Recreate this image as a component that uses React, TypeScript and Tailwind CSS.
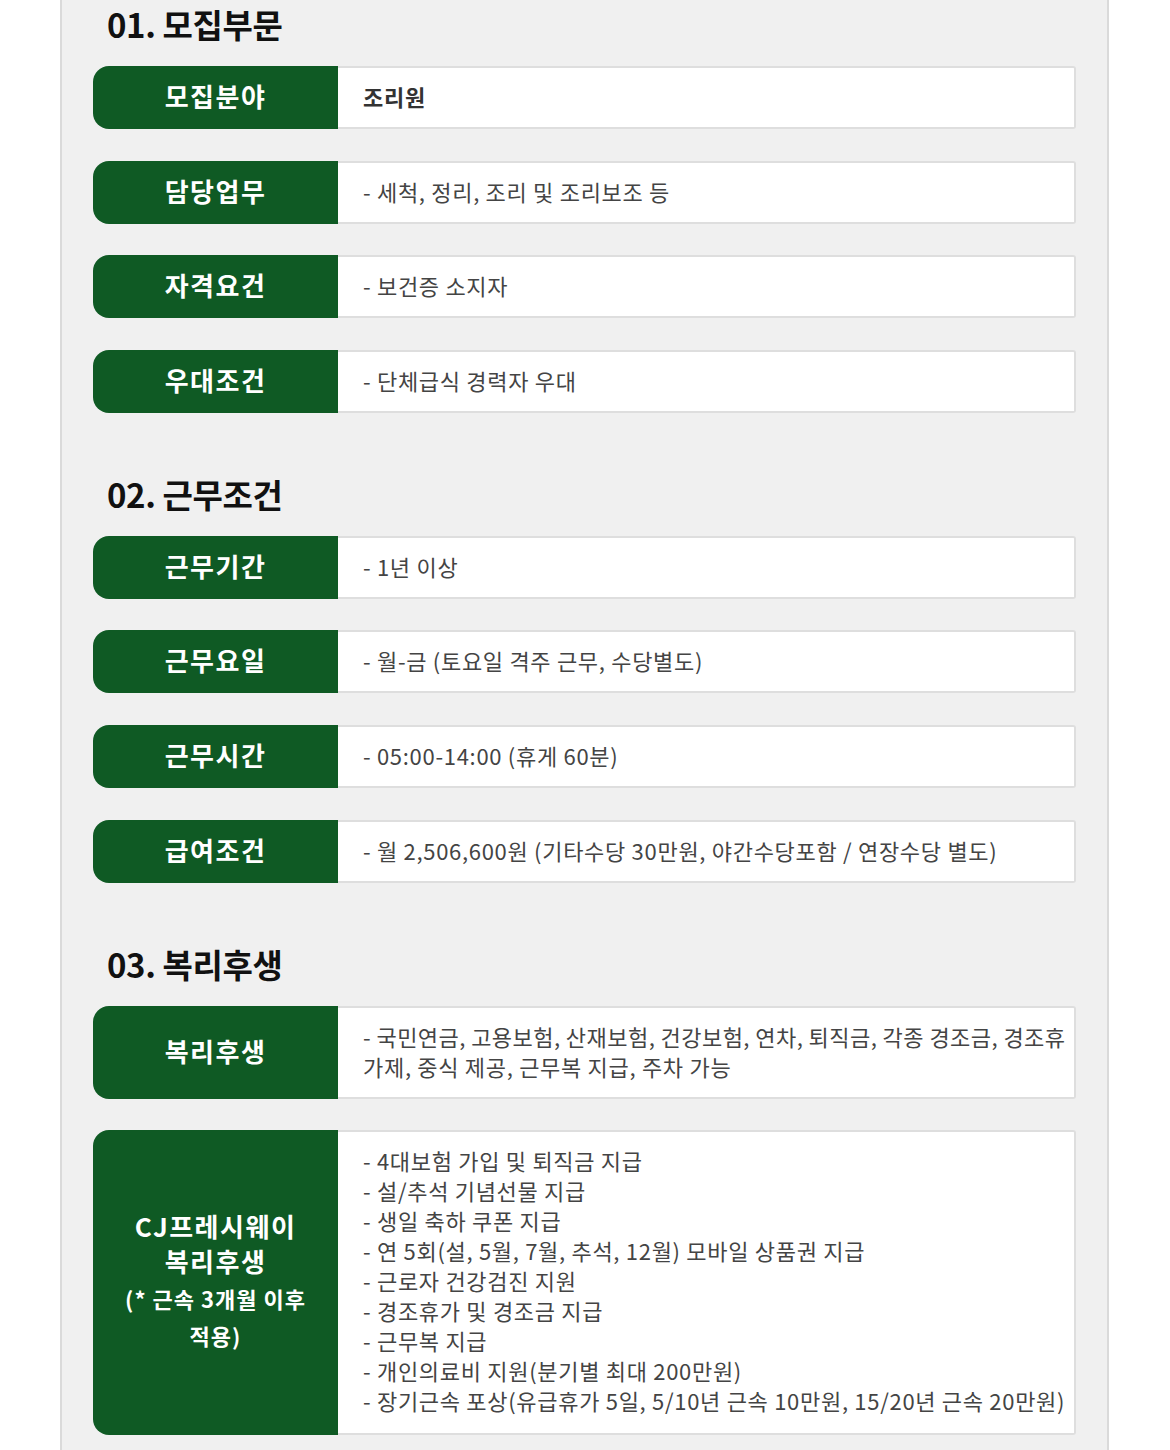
import React from "react";

const FONT = { fontFamily: '"Noto Sans CJK KR", "Noto Sans", sans-serif' };

type Row = { label: React.ReactNode; content: React.ReactNode; bold?: boolean };

function InfoRow({ label, content, bold }: Row) {
  return (
    <div className="flex w-full">
      <div className="w-[245px] shrink-0 bg-[#0f5a24] rounded-l-[16px] flex items-center justify-center text-white font-bold text-[26px] tracking-[1.5px] leading-[34px] text-center pb-[3px]">
        {label}
      </div>
      <div
        className={`flex-1 min-w-0 bg-white border-2 border-l-0 border-[#dedede] rounded-r-[3px] flex items-center pl-[25px] pr-0 pt-[13px] pb-[16px] min-h-[63px] text-[22px] tracking-[0.7px] leading-[30px] whitespace-nowrap ${
          bold ? "font-bold text-[#333]" : "text-[#444]"
        }`}
      >
        <div>{content}</div>
      </div>
    </div>
  );
}

function Section({ title, rows, first }: { title: string; rows: Row[]; first?: boolean }) {
  return (
    <div className={first ? "" : "mt-[61px]"}>
      <h2 className="pl-[14px] h-[40px] leading-[40px] text-[33px] font-bold text-[#111] tracking-[-0.4px] mb-[22px]">
        {title}
      </h2>
      <div className="flex flex-col gap-[31.6px]">
        {rows.map((r, i) => (
          <InfoRow key={i} {...r} />
        ))}
      </div>
    </div>
  );
}

export default function App() {
  const benefits = [
    "- 4대보험 가입 및 퇴직금 지급",
    "- 설/추석 기념선물 지급",
    "- 생일 축하 쿠폰 지급",
    "- 연 5회(설, 5월, 7월, 추석, 12월) 모바일 상품권 지급",
    "- 근로자 건강검진 지원",
    "- 경조휴가 및 경조금 지급",
    "- 근무복 지급",
    "- 개인의료비 지원(분기별 최대 200만원)",
    "- 장기근속 포상(유급휴가 5일, 5/10년 근속 10만원, 15/20년 근속 20만원)",
  ];
  return (
    <div className="w-[1170px] h-[1450px] bg-white overflow-hidden" style={FONT}>
      <div className="ml-[60px] w-[1049px] h-[1450px] bg-[#f0f0f0] border-x-2 border-[#dadada] pt-[4px] pl-[31px] pr-[31px]">
        <Section
          first
          title="01. 모집부문"
          rows={[
            { label: "모집분야", content: "조리원", bold: true },
            { label: "담당업무", content: "- 세척, 정리, 조리 및 조리보조 등" },
            { label: "자격요건", content: "- 보건증 소지자" },
            { label: "우대조건", content: "- 단체급식 경력자 우대" },
          ]}
        />
        <Section
          title="02. 근무조건"
          rows={[
            { label: "근무기간", content: "- 1년 이상" },
            { label: "근무요일", content: "- 월-금 (토요일 격주 근무, 수당별도)" },
            { label: "근무시간", content: "- 05:00-14:00 (휴게 60분)" },
            {
              label: "급여조건",
              content: "- 월 2,506,600원 (기타수당 30만원, 야간수당포함 / 연장수당 별도)",
            },
          ]}
        />
        <Section
          title="03. 복리후생"
          rows={[
            {
              label: "복리후생",
              content: (
                <>
                  <div className="tracking-[0.45px]">- 국민연금, 고용보험, 산재보험, 건강보험, 연차, 퇴직금, 각종 경조금, 경조휴</div>
                  <div>가제, 중식 제공, 근무복 지급, 주차 가능</div>
                </>
              ),
            },
            {
              label: (
                <div className="flex flex-col items-center">
                  <div className="leading-[35px]">CJ프레시웨이</div>
                  <div className="leading-[35px]">복리후생</div>
                  <div className="text-[22px] tracking-[1px] leading-[37px] mt-[2px]">(* 근속 3개월 이후</div>
                  <div className="text-[22px] tracking-[1px] leading-[37px]">적용)</div>
                </div>
              ),
              content: (
                <div className="pb-[2px]">
                  {benefits.map((b, i) => (
                    <div key={i}>{b}</div>
                  ))}
                </div>
              ),
            },
          ]}
        />
      </div>
    </div>
  );
}
